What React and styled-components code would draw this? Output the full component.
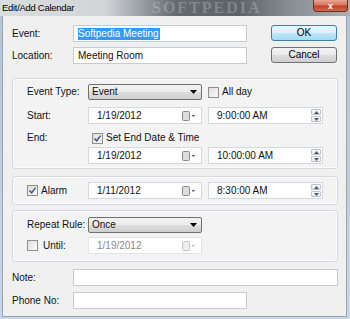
import styled, { createGlobalStyle } from "styled-components"

const GlobalStyle = createGlobalStyle`
  html, body {
    margin: 0;
    padding: 0;
    background: #8a9299;
  }
  body {
    font-family: "Liberation Sans", Arial, sans-serif;
    font-size: 10px;
    color: #111;
  }
`

const Window = styled.div`
  width: 350px;
  height: 319px;
  display: flex;
  flex-direction: column;
  background: linear-gradient(180deg, #b4c4d4, #c8d8e8);
  overflow: hidden;
`

const TitleBar = styled.div`
  position: relative;
  height: 16px;
  flex-shrink: 0;
  display: flex;
  justify-content: space-between;
  align-items: flex-start;
  overflow: hidden;
  background: linear-gradient(90deg, #dadde0 0%, #d2d5d8 30%, #9ba1a6 40%, #646b70 50%, #5c6368 68%, #858c91 82%, #aab0b5 100%);
`

const TitleText = styled.span`
  margin: 2px 0 0 2px;
  font-size: 9.5px;
  letter-spacing: -0.3px;
  color: #000;
  position: relative;
  z-index: 1;
`

const Watermark = styled.span`
  position: absolute;
  left: 152px;
  top: 0;
  font-size: 16px;
  line-height: 16px;
  font-weight: bold;
  letter-spacing: 2px;
  color: rgba(255, 255, 255, 0.22);
  font-family: "Liberation Serif", serif;
`

const CloseButton = styled.div`
  width: 35px;
  height: 12px;
  margin-right: 2px;
  box-sizing: border-box;
  border: 1px solid #7a2a1e;
  border-top: none;
  border-radius: 0 0 4px 4px;
  background: linear-gradient(180deg, #e9a594 0%, #d8735c 45%, #c0402a 55%, #d06a4e 100%);
  display: flex;
  align-items: center;
  justify-content: center;
  color: #fff;
  font-weight: bold;
  font-size: 9px;
  position: relative;
  z-index: 1;
`

const Content = styled.div`
  flex: 1;
  margin: 0 4px 3px 3px;
  padding: 9px 0 0 9px;
  background: #f0f0f0;
  box-shadow: 0 0 0 1px #98a4b0;
  display: flex;
  flex-direction: column;
`

const TopSection = styled.div`
  display: flex;
  align-items: flex-start;
`

const FieldColumn = styled.div`
  display: flex;
  flex-direction: column;
  gap: 5px;
`

const FormRow = styled.div`
  display: flex;
  align-items: center;
  margin-top: ${p => p.$mt || 0}px;
`

const Label = styled.span`
  width: ${p => p.$w || 61}px;
  flex-shrink: 0;
  line-height: 12px;
`

const TextInput = styled.div`
  width: ${p => p.$w}px;
  height: 17px;
  box-sizing: border-box;
  border: 1px solid #c5ccd4;
  background: #fff;
  padding-left: 4px;
  display: flex;
  align-items: center;
  line-height: 12px;
  white-space: nowrap;
`

const Selected = styled.span`
  background: #3399ff;
  color: #fff;
  padding: 0 1px 0 0;
`

const ButtonColumn = styled.div`
  margin-left: 24px;
  display: flex;
  flex-direction: column;
  gap: 6px;
`

const Button = styled.div`
  width: 66px;
  height: 16px;
  box-sizing: border-box;
  border: 1px solid ${p => (p.$primary ? "#3c7fb1" : "#707070")};
  border-radius: 3px;
  background: ${p =>
    p.$primary
      ? "linear-gradient(180deg, #eaf6fd 0%, #d9f0fc 48%, #bee6fd 52%, #a7d9f5 100%)"
      : "linear-gradient(180deg, #f2f2f2 0%, #ebebeb 48%, #dddddd 52%, #cfcfcf 100%)"};
  display: flex;
  align-items: center;
  justify-content: center;
  line-height: 12px;
  color: #000;
`

const Group = styled.div`
  width: 326px;
  box-sizing: border-box;
  margin-top: ${p => p.$mt}px;
  padding: ${p => p.$pad};
  border: 1px solid #d6dadf;
  border-radius: 3px;
  background: #f3f3f3;
  box-shadow: inset 0 0 0 1px #fbfbfb;
  display: flex;
  flex-direction: column;
`

const Combo = styled.div`
  width: 114px;
  height: 16px;
  box-sizing: border-box;
  border: 1px solid #707070;
  border-radius: 2px;
  background: linear-gradient(180deg, #f2f2f2 0%, #ebebeb 48%, #dddddd 52%, #cfcfcf 100%);
  padding: 0 4px 0 3px;
  display: flex;
  align-items: center;
  justify-content: space-between;
  line-height: 12px;
`

const DateField = styled.div`
  width: 114px;
  height: 17px;
  box-sizing: border-box;
  border: 1px solid ${p => (p.$disabled ? "#e2e5e8" : "#d3d9e0")};
  background: #fff;
  padding: 0 5px 0 8px;
  display: flex;
  align-items: center;
  justify-content: space-between;
  color: ${p => (p.$disabled ? "#8a8a8a" : "#111")};
  line-height: 12px;
`

const TimeField = styled.div`
  width: 115px;
  height: 17px;
  margin-left: 6px;
  box-sizing: border-box;
  border: 1px solid #d3d9e0;
  background: #fff;
  padding: 0 1px 0 8px;
  display: flex;
  align-items: center;
  justify-content: space-between;
  line-height: 12px;
`

const Spinner = styled.div`
  width: 10px;
  height: 13px;
  display: flex;
  flex-direction: column;
  gap: 1px;
`

const SpinHalf = styled.div`
  flex: 1;
  border: 1px solid #bcc3cc;
  border-radius: 1px;
  background: linear-gradient(180deg, #fafbfc, #e6eaee);
  display: flex;
  align-items: center;
  justify-content: center;
`

const CheckLabel = styled.label`
  display: flex;
  align-items: center;
  gap: ${p => p.$gap || 3}px;
  line-height: 12px;
  margin-left: ${p => p.$ml || 0}px;
  width: ${p => (p.$w ? `${p.$w}px` : "auto")};
  flex-shrink: 0;
`

const Box = styled.span`
  width: 11px;
  height: 11px;
  box-sizing: border-box;
  border: 1px solid #8f8f8f;
  background: linear-gradient(135deg, #dcdcdc, #fcfcfc);
  display: flex;
  align-items: center;
  justify-content: center;
`

const Checkbox = ({ checked }) => (
  <Box>
    {checked && (
      <svg width="9" height="9" viewBox="0 0 9 9">
        <path d="M1.5 4.5 L3.6 6.8 L7.6 1.6" fill="none" stroke="#3a5585" strokeWidth="1.4" />
      </svg>
    )}
  </Box>
)

const CalendarIcon = ({ faded }) => (
  <svg width="14" height="10" viewBox="0 0 14 10">
    <rect x="0.5" y="0.5" width="7" height="9" rx="1" fill={faded ? "#eeeeee" : "#dcdcdc"} stroke={faded ? "#c4c4c4" : "#8a8a8a"} />
    <path d="M9.5 4 L13 4 L11.25 6 Z" fill={faded ? "#b8b8b8" : "#4a5a78"} />
  </svg>
)

const ComboArrow = () => (
  <svg width="7" height="4" viewBox="0 0 7 4">
    <path d="M0 0 L7 0 L3.5 4 Z" fill="#000" />
  </svg>
)

const SpinArrow = ({ up }) => (
  <svg width="5" height="3" viewBox="0 0 5 3">
    <path d={up ? "M0 3 L5 3 L2.5 0 Z" : "M0 0 L5 0 L2.5 3 Z"} fill="#4a5a6a" />
  </svg>
)

const TimeInput = ({ value }) => (
  <TimeField>
    <span>{value}</span>
    <Spinner>
      <SpinHalf><SpinArrow up /></SpinHalf>
      <SpinHalf><SpinArrow /></SpinHalf>
    </Spinner>
  </TimeField>
)

const DateInput = ({ value, disabled }) => (
  <DateField $disabled={disabled}>
    <span>{value}</span>
    <CalendarIcon faded={disabled} />
  </DateField>
)

const App = () => {
  return (
    <Window>
      <GlobalStyle />
      <TitleBar>
        <TitleText>Edit/Add Calendar</TitleText>
        <Watermark>SOFTPEDIA</Watermark>
        <CloseButton>x</CloseButton>
      </TitleBar>
      <Content>
        <TopSection>
          <FieldColumn>
            <FormRow>
              <Label>Event:</Label>
              <TextInput $w={174}><Selected>Softpedia Meeting</Selected></TextInput>
            </FormRow>
            <FormRow>
              <Label>Location:</Label>
              <TextInput $w={174}>Meeting Room</TextInput>
            </FormRow>
          </FieldColumn>
          <ButtonColumn>
            <Button $primary>OK</Button>
            <Button>Cancel</Button>
          </ButtonColumn>
        </TopSection>

        <Group $mt={14} $pad="5px 0 4px 14px">
          <FormRow>
            <Label>Event Type:</Label>
            <Combo>
              <span>Event</span>
              <ComboArrow />
            </Combo>
            <CheckLabel $ml={6}>
              <Checkbox />
              All day
            </CheckLabel>
          </FormRow>
          <FormRow $mt={7}>
            <Label>Start:</Label>
            <DateInput value="1/19/2012" />
            <TimeInput value="9:00:00 AM" />
          </FormRow>
          <FormRow $mt={8}>
            <Label>End:</Label>
            <CheckLabel $ml={4}>
              <Checkbox checked />
              Set End Date &amp; Time
            </CheckLabel>
          </FormRow>
          <FormRow $mt={3}>
            <Label />
            <DateInput value="1/19/2012" />
            <TimeInput value="10:00:00 AM" />
          </FormRow>
        </Group>

        <Group $mt={7} $pad="5px 0 5px 14px">
          <FormRow>
            <CheckLabel $w={61}>
              <Checkbox checked />
              Alarm
            </CheckLabel>
            <DateInput value="1/11/2012" />
            <TimeInput value="8:30:00 AM" />
          </FormRow>
        </Group>

        <Group $mt={5} $pad="6px 0 7px 14px">
          <FormRow>
            <Label>Repeat Rule:</Label>
            <Combo>
              <span>Once</span>
              <ComboArrow />
            </Combo>
          </FormRow>
          <FormRow $mt={4}>
            <CheckLabel $w={61} $gap={5}>
              <Checkbox />
              Until:
            </CheckLabel>
            <DateInput value="1/19/2012" disabled />
          </FormRow>
        </Group>

        <FormRow $mt={7}>
          <Label>Note:</Label>
          <TextInput $w={265} />
        </FormRow>
        <FormRow $mt={6}>
          <Label>Phone No:</Label>
          <TextInput $w={174} />
        </FormRow>
      </Content>
    </Window>
  )
}

export default App
